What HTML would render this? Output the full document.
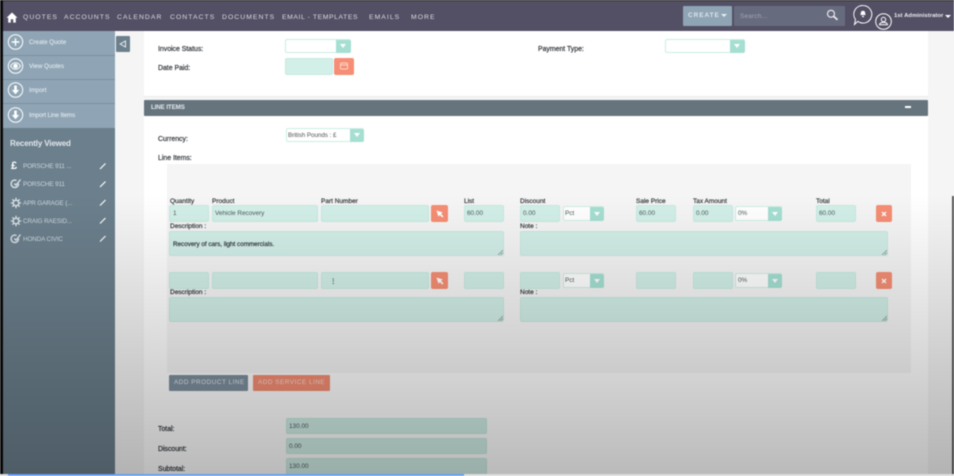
<!DOCTYPE html>
<html><head><meta charset="utf-8"><style>
html,body{margin:0;padding:0;width:954px;height:476px;overflow:hidden;background:#f5f5f5}
#w{position:absolute;left:0;top:0;width:954px;height:476px;overflow:hidden;font-family:"Liberation Sans",sans-serif;filter:blur(.55px);background:#f5f5f5}
#w div,#w svg{position:absolute}
.t{white-space:nowrap;line-height:10px;height:10px;margin-top:1px}
.nav{top:12px;color:#dcdce3;font-size:6.8px;letter-spacing:1.05px}
.l{color:#33383c;font-size:6.9px;-webkit-text-stroke:.22px #33383c;letter-spacing:0}
.s{color:#33383c;font-size:6.5px;-webkit-text-stroke:.2px #33383c;letter-spacing:0}
.f{background:#d2efe8;border:1px solid #c6eae1;border-radius:2px;box-sizing:border-box}
.v{color:#4d5a5c;font-size:6.4px;letter-spacing:0}
.sel{background:#fff;border:1px solid #cceee6;border-radius:2px;box-sizing:border-box}
.arr{background:#a5dfd2;border-radius:0 2px 2px 0}
.tri{width:0;height:0;border-left:3px solid transparent;border-right:3px solid transparent;border-top:4px solid #fff}
.ob{background:#f58e74;border-radius:2px}
.si{color:#f0f4f7;font-size:6.2px}
.rv{color:#ced8df;font-size:6.3px}
.sep{left:3px;width:112px;height:1px;background:#7c919f}
</style></head><body><div id="w">
<div style="left:0;top:0;width:954px;height:1px;background:#222"></div>
<div style="left:0;top:1px;width:954px;height:30px;background:#534f64"></div>
<div style="left:0;top:0;width:3px;height:476px;background:#0a0a0a"></div>
<div style="left:3px;top:31px;width:112px;height:445px;background:#6b7f8c"></div>
<div style="left:3px;top:31px;width:112px;height:97px;background:#8fa5b5"></div>
<div class="sep" style="top:55px"></div><div class="sep" style="top:79px"></div><div class="sep" style="top:103px"></div>
<div style="left:144px;top:31px;width:784px;height:65px;background:#fff"></div>
<div style="left:144px;top:96px;width:784px;height:1px;background:#ececec"></div>
<div style="left:144px;top:115px;width:784px;height:361px;background:#fff"></div>
<div style="left:144px;top:100px;width:784px;height:16px;background:#66747e;border-radius:1px"></div>
<div style="left:167px;top:164px;width:744px;height:209px;background:#f5f5f5"></div>
<div style="left:952px;top:196px;width:2px;height:280px;background:#555"></div>

<!-- nav -->
<svg style="left:6px;top:12px" width="12" height="11" viewBox="0 0 12 11"><path d="M6 .5L.5 5.800H2.200V10.600H4.800V7.300H7.200V10.600H9.800V5.800H11.500Z" fill="#fff"/></svg>
<div class="t nav" style="left:23px">QUOTES</div>
<div class="t nav" style="left:64px">ACCOUNTS</div>
<div class="t nav" style="left:117px">CALENDAR</div>
<div class="t nav" style="left:170px">CONTACTS</div>
<div class="t nav" style="left:222px">DOCUMENTS</div>
<div class="t nav" style="left:282px;letter-spacing:.6px">EMAIL - TEMPLATES</div>
<div class="t nav" style="left:369px">EMAILS</div>
<div class="t nav" style="left:411px">MORE</div>
<div style="left:683px;top:6px;width:49px;height:20px;background:#8fa5b5;border-radius:1px"></div>
<div class="t" style="left:688px;top:10px;color:#dfe6eb;font-size:6.400px;font-weight:bold;letter-spacing:1px">CREATE</div>
<div class="tri" style="left:721px;top:14px;border-top-color:#e8edf1;border-top-width:3px"></div>
<div style="left:734px;top:6px;width:111px;height:20px;background:#676b7e;border-radius:1px"></div>
<div class="t" style="left:740px;top:11px;color:#a3a6b3;font-size:6.400px;letter-spacing:.2px">Search...</div>
<svg style="left:826px;top:9px" width="13" height="12" viewBox="0 0 13 12" fill="none" stroke="#f0f0f4"><circle cx="5" cy="4.800" r="3.500" stroke-width="1.100"/><path d="M7.800 7.500L11.500 10.800" stroke-width="1.700"/></svg>
<svg style="left:852px;top:4px" width="22" height="23" viewBox="0 0 22 23" fill="none" stroke="#fff" stroke-width="1"><path d="M11 1.500a8.800 8.800 0 1 1-5.200 15.900L2.500 20.500l1-5A8.800 8.800 0 0 1 11 1.500Z"/><path d="M8.200 11c.8-.9.500-1.700.7-2.700.3-1.100 1-1.500 2.100-1.500s1.800.4 2.100 1.500c.2 1 -.1 1.800.7 2.700Z" fill="#fff" stroke="none"/><path d="M10 11.800h2v1.300h-2Z" fill="#fff" stroke="none"/></svg>
<svg style="left:874px;top:12px" width="19" height="19" viewBox="0 0 19 19" fill="none" stroke="#fff" stroke-width="1"><circle cx="9.500" cy="9.500" r="7.800"/><circle cx="9.500" cy="7.500" r="2.200"/><path d="M5 12.800h9M5.400 12.800c.3-1.800 1.400-2.400 4.100-2.400s3.800.6 4.100 2.400"/></svg>
<div class="t" style="left:894px;top:10px;color:#eeeef2;font-size:5.900px;font-weight:bold;letter-spacing:.05px">1st Administrator</div>
<div class="tri" style="left:945px;top:15px;border-top-color:#fff;border-top-width:3px"></div>

<!-- sidebar top -->
<svg style="left:7px;top:34px" width="17" height="90" viewBox="0 0 17 90" fill="none" stroke="#fff" stroke-width="1"><circle cx="8.500" cy="8" r="7.200"/><path d="M8.500 4.200v7.600M4.700 8h7.600" stroke-width="1.400"/><circle cx="8.500" cy="32" r="7.200"/><path d="M3.500 32c1.500-2.300 3.200-3.200 5-3.200s3.500.9 5 3.200c-1.500 2.300-3.200 3.200-5 3.200s-3.500-.9-5-3.200Z"/><circle cx="8.500" cy="32" r="1.800" fill="#fff"/><circle cx="8.500" cy="56" r="7.200"/><path d="M7.200 51.500h2.600v4.500h2.400l-3.700 4.200-3.700-4.200h2.400Z" fill="#fff" stroke="none"/><circle cx="8.500" cy="81" r="7.200"/><path d="M7.200 76.500h2.600v4.500h2.400l-3.700 4.200-3.700-4.200h2.400Z" fill="#fff" stroke="none"/></svg>
<div class="t si" style="left:29px;top:37px">Create Quote</div>
<div class="t si" style="left:29px;top:61px">View Quotes</div>
<div class="t si" style="left:29px;top:85px">Import</div>
<div class="t si" style="left:29px;top:110px;letter-spacing:-.1px">Import Line Items</div>
<div style="left:116px;top:36px;width:14px;height:16px;background:#6b7f8c;border-radius:1px"></div>
<svg style="left:119px;top:40px" width="8" height="8" viewBox="0 0 8 8" fill="none" stroke="#e8edf1"><path d="M6.500 1v6L1.200 4Z"/></svg>

<!-- recently viewed -->
<div class="t" style="left:10px;top:138px;color:#e3e8ec;font-size:8px;font-weight:bold;letter-spacing:-.15px">Recently Viewed</div>
<div class="t" style="left:11px;top:160px;color:#fff;font-size:11px;font-weight:bold">£</div>
<svg style="left:10px;top:178px" width="12" height="12" viewBox="0 0 12 12" fill="none" stroke="#d8e0e6" stroke-width="1.400"><path d="M8.500 5.500a3.700 3.700 0 1 1-2-3"/><path d="M4.300 5.500l1.700 1.700L10.500 1.500"/></svg>
<svg style="left:10px;top:197px" width="12" height="12" viewBox="0 0 12 12" fill="none" stroke="#d8e0e6"><circle cx="6" cy="6" r="2.800" stroke-width="1.500"/><path d="M6 .8v2M6 9.200v2M.8 6h2M9.200 6h2M2.300 2.300l1.400 1.400M8.300 8.300l1.400 1.400M9.700 2.300L8.300 3.700M3.700 8.300L2.300 9.700" stroke-width="1.300"/></svg>
<svg style="left:10px;top:215px" width="12" height="12" viewBox="0 0 12 12" fill="none" stroke="#d8e0e6"><circle cx="6" cy="6" r="2.800" stroke-width="1.500"/><path d="M6 .8v2M6 9.200v2M.8 6h2M9.200 6h2M2.300 2.300l1.400 1.400M8.300 8.300l1.400 1.400M9.700 2.300L8.300 3.700M3.700 8.300L2.300 9.700" stroke-width="1.300"/></svg>
<svg style="left:10px;top:233px" width="12" height="12" viewBox="0 0 12 12" fill="none" stroke="#d8e0e6" stroke-width="1.400"><path d="M8.500 5.500a3.700 3.700 0 1 1-2-3"/><path d="M4.300 5.500l1.700 1.700L10.500 1.500"/></svg>
<div class="t rv" style="left:23px;top:161px;letter-spacing:-.1px">PORSCHE 911 ...</div>
<div class="t rv" style="left:23px;top:179px;letter-spacing:-.1px">PORSCHE 911</div>
<div class="t rv" style="left:23px;top:198px;letter-spacing:-.1px">APR GARAGE (...</div>
<div class="t rv" style="left:23px;top:216px;letter-spacing:-.1px">CRAIG RAESID...</div>
<div class="t rv" style="left:23px;top:234px;letter-spacing:-.1px">HONDA CIVIC</div>
<svg style="left:99px;top:161px" width="8" height="84" viewBox="0 0 8 84" stroke="#fff" stroke-width="1.200"><path d="M1 8L6.500 2.500M1 26L6.500 20.500M1 44.500L6.500 39M1 62.500L6.500 57M1 80.500L6.500 75"/></svg>

<!-- top form -->
<div class="t l" style="left:158px;top:44px">Invoice Status:</div>
<div class="sel" style="left:285px;top:39px;width:66px;height:14px"></div>
<div class="arr" style="left:336px;top:40px;width:15px;height:13px"></div><div class="tri" style="left:340px;top:44px"></div>
<div class="t l" style="left:158px;top:63px">Date Paid:</div>
<div class="f" style="left:285px;top:58px;width:48px;height:17px"></div>
<div class="ob" style="left:334px;top:58px;width:20px;height:17px"></div>
<svg style="left:339px;top:61px" width="10" height="10" viewBox="0 0 10 10" fill="none" stroke="#fbd5c9"><rect x="1.500" y="2" width="7" height="6" rx="1"/><path d="M1.500 4h7"/></svg>
<div class="t l" style="left:538px;top:44px">Payment Type:</div>
<div class="sel" style="left:665px;top:39px;width:80px;height:14px"></div>
<div class="arr" style="left:730px;top:40px;width:15px;height:13px"></div><div class="tri" style="left:734px;top:44px"></div>

<div class="t" style="left:151px;top:102px;color:#e6ebee;font-size:6.200px;font-weight:bold;letter-spacing:-.1px">LINE ITEMS</div>
<div style="left:905px;top:106px;width:6px;height:2px;background:#fff"></div>

<div class="t l" style="left:158px;top:134px">Currency:</div>
<div class="sel" style="left:286px;top:128px;width:78px;height:14px"></div>
<div class="t" style="left:288px;top:130px;font-size:6.300px;color:#555;letter-spacing:-.05px">British Pounds : £</div>
<div class="arr" style="left:350px;top:129px;width:14px;height:13px"></div><div class="tri" style="left:354px;top:133px"></div>
<div class="t l" style="left:158px;top:153px">Line Items:</div>

<!-- row 1 labels -->
<div class="t s" style="left:170px;top:196px">Quantity</div>
<div class="t s" style="left:212px;top:196px">Product</div>
<div class="t s" style="left:321px;top:196px">Part Number</div>
<div class="t s" style="left:464px;top:196px">List</div>
<div class="t s" style="left:520px;top:196px">Discount</div>
<div class="t s" style="left:636px;top:196px">Sale Price</div>
<div class="t s" style="left:693px;top:196px">Tax Amount</div>
<div class="t s" style="left:816px;top:196px">Total</div>

<!-- row 1 -->
<div class="f" style="left:169px;top:205px;width:40px;height:17px"></div><div class="t v" style="left:173px;top:208px">1</div>
<div class="f" style="left:212px;top:205px;width:106px;height:17px"></div><div class="t v" style="left:215px;top:208px">Vehicle Recovery</div>
<div class="f" style="left:321px;top:205px;width:108px;height:17px"></div>
<div class="ob" style="left:431px;top:205px;width:17px;height:17px"></div>
<svg style="left:436px;top:210px" width="8" height="8" viewBox="0 0 8 8"><path d="M.5.500L6.800 2.500 5 3.800 7.500 6.500 6.300 7.500 3.800 5 2.500 6.800Z" fill="#fff"/></svg>
<div class="f" style="left:464px;top:205px;width:40px;height:17px"></div><div class="t v" style="left:467px;top:208px">60.00</div>
<div class="f" style="left:520px;top:205px;width:40px;height:17px"></div><div class="t v" style="left:523px;top:208px">0.00</div>
<div class="sel" style="left:563px;top:206px;width:41px;height:15px"></div><div class="t v" style="left:565px;top:208px">Pct</div>
<div class="arr" style="left:590px;top:207px;width:14px;height:14px"></div><div class="tri" style="left:594px;top:212px"></div>
<div class="f" style="left:636px;top:205px;width:40px;height:17px"></div><div class="t v" style="left:639px;top:208px">60.00</div>
<div class="f" style="left:693px;top:205px;width:40px;height:17px"></div><div class="t v" style="left:696px;top:208px">0.00</div>
<div class="sel" style="left:735px;top:206px;width:47px;height:15px"></div><div class="t v" style="left:738px;top:208px">0%</div>
<div class="arr" style="left:768px;top:207px;width:14px;height:14px"></div><div class="tri" style="left:772px;top:212px"></div>
<div class="f" style="left:816px;top:205px;width:40px;height:17px"></div><div class="t v" style="left:819px;top:208px">60.00</div>
<div class="ob" style="left:876px;top:205px;width:16px;height:17px"></div>
<svg style="left:880px;top:210px" width="8" height="8" viewBox="0 0 8 8" stroke="#fff" stroke-width="1.300"><path d="M2 2l4 4M6 2L2 6"/></svg>
<div class="t s" style="left:170px;top:221px">Description :</div>
<div class="t s" style="left:520px;top:221px">Note :</div>
<div class="f" style="left:169px;top:231px;width:335px;height:25px"></div>
<div class="t s" style="left:173px;top:239px;font-size:6.300px">Recovery of cars, light commercials.</div>
<div class="f" style="left:520px;top:231px;width:368px;height:25px"></div>

<!-- row 2 -->
<div class="f" style="left:169px;top:272px;width:40px;height:17px"></div>
<div class="f" style="left:212px;top:272px;width:106px;height:17px"></div>
<div class="f" style="left:321px;top:272px;width:108px;height:17px"></div><div class="t v" style="left:330px;top:276px;font-weight:bold">⋮</div>
<div class="ob" style="left:431px;top:272px;width:17px;height:17px"></div>
<svg style="left:436px;top:277px" width="8" height="8" viewBox="0 0 8 8"><path d="M.5.500L6.800 2.500 5 3.800 7.500 6.500 6.300 7.500 3.800 5 2.500 6.800Z" fill="#fff"/></svg>
<div class="f" style="left:464px;top:272px;width:40px;height:17px"></div>
<div class="f" style="left:520px;top:272px;width:40px;height:17px"></div>
<div class="sel" style="left:563px;top:273px;width:41px;height:15px"></div><div class="t v" style="left:565px;top:275px">Pct</div>
<div class="arr" style="left:590px;top:274px;width:14px;height:14px"></div><div class="tri" style="left:594px;top:279px"></div>
<div class="f" style="left:636px;top:272px;width:40px;height:17px"></div>
<div class="f" style="left:693px;top:272px;width:40px;height:17px"></div>
<div class="sel" style="left:735px;top:273px;width:47px;height:15px"></div><div class="t v" style="left:738px;top:275px">0%</div>
<div class="arr" style="left:768px;top:274px;width:14px;height:14px"></div><div class="tri" style="left:772px;top:279px"></div>
<div class="f" style="left:816px;top:272px;width:40px;height:17px"></div>
<div class="ob" style="left:876px;top:272px;width:16px;height:17px"></div>
<svg style="left:880px;top:277px" width="8" height="8" viewBox="0 0 8 8" stroke="#fff" stroke-width="1.300"><path d="M2 2l4 4M6 2L2 6"/></svg>
<div class="t s" style="left:170px;top:287px">Description :</div>
<div class="t s" style="left:520px;top:287px">Note :</div>
<div class="f" style="left:169px;top:297px;width:335px;height:25px"></div>
<div class="f" style="left:520px;top:297px;width:368px;height:25px"></div>

<!-- resize grips -->
<svg style="left:498px;top:250px" width="5" height="5" stroke="#777" stroke-width=".6"><path d="M0 5L5 0M2.500 5L5 2.500"/></svg>
<svg style="left:882px;top:250px" width="5" height="5" stroke="#777" stroke-width=".6"><path d="M0 5L5 0M2.500 5L5 2.500"/></svg>
<svg style="left:498px;top:316px" width="5" height="5" stroke="#777" stroke-width=".6"><path d="M0 5L5 0M2.500 5L5 2.500"/></svg>
<svg style="left:882px;top:316px" width="5" height="5" stroke="#777" stroke-width=".6"><path d="M0 5L5 0M2.500 5L5 2.500"/></svg>

<!-- buttons -->
<div style="left:169px;top:375px;width:79px;height:16px;background:#7d909e;border-radius:1px"></div>
<div class="t" style="left:174px;top:377px;color:#e6ebef;font-size:6.400px;letter-spacing:.5px">ADD PRODUCT LINE</div>
<div style="left:253px;top:375px;width:77px;height:16px;background:#f58e74;border-radius:1px"></div>
<div class="t" style="left:258px;top:377px;color:#fde0d6;font-size:6.400px;letter-spacing:.5px">ADD SERVICE LINE</div>

<!-- totals -->
<div class="t l" style="left:158px;top:424px">Total:</div>
<div class="f" style="left:286px;top:418px;width:201px;height:16px"></div><div class="t v" style="left:289px;top:421px">130.00</div>
<div class="t l" style="left:158px;top:444px">Discount:</div>
<div class="f" style="left:286px;top:438px;width:201px;height:16px"></div><div class="t v" style="left:289px;top:441px">0.00</div>
<div class="t l" style="left:158px;top:464px">Subtotal:</div>
<div class="f" style="left:286px;top:458px;width:201px;height:17px"></div><div class="t v" style="left:289px;top:461px">130.00</div>

<!-- video overlay gradient -->
<div style="left:0;top:195px;width:954px;height:281px;background:linear-gradient(to bottom,rgba(0,0,0,0),rgba(0,0,0,.27))"></div>
<!-- progress -->
<div style="left:0;top:474px;width:954px;height:2px;background:#dcdcdc"></div>
<div style="left:8px;top:474px;width:456px;height:2px;background:#6a9ff0"></div>
</div></body></html>
